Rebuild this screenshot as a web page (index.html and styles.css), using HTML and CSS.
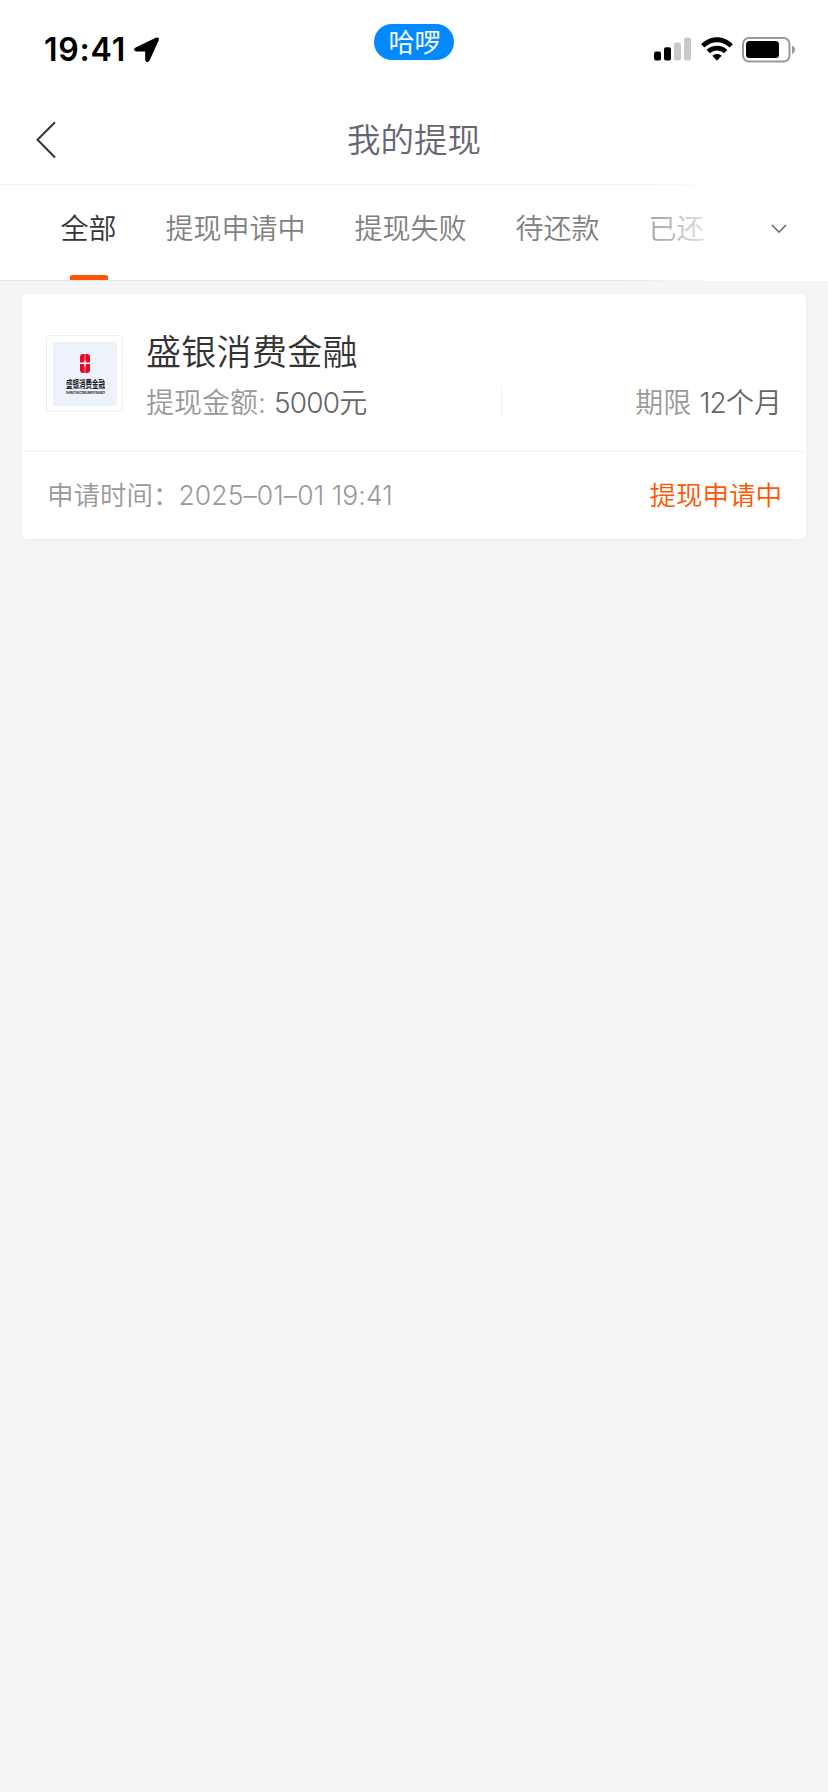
FILE: index.html
```
<!DOCTYPE html>
<html lang="zh-CN">
<head>
    <meta charset="UTF-8">
    <meta name="viewport" content="width=device-width, initial-scale=1.0">
    <title>我的提现</title>
    <link rel="stylesheet" href="styles.css">
</head>
<body>

    <!-- Status bar -->
    <div class="status-bar">
        <div class="status-left">
            <span class="clock">19:41</span>
            <svg class="location" width="26" height="26" viewBox="0 0 26 26">
                <path d="M1.6 10.4 L21.8 .8 Q25.8 -.6 24.6 3.4 L15.6 23.6 Q13 27 11.2 23.6 V14.4 H2.4 Q-2 13 1.6 10.4 Z"/>
            </svg>
        </div>
        <div class="app-pill">哈啰</div>
        <div class="status-right">
            <svg class="signal" width="38" height="24" viewBox="0 0 38 24">
                <rect x="0" y="14.5" width="7" height="9" rx="2"/>
                <rect x="10" y="10.2" width="7" height="13.3" rx="2"/>
                <rect class="off" x="20" y="5.5" width="7" height="18" rx="2"/>
                <rect class="off" x="30" y=".5" width="7" height="23" rx="2"/>
            </svg>
            <svg class="wifi" width="32" height="24" viewBox="0 0 32 24">
                <path d="M.2 7.2 C9 -2.1 23 -2.1 31.8 7.2 L28.6 10.5 C21.4 3.6 10.6 3.6 3.4 10.5 Z"/>
                <path d="M5.6 12.9 C11.5 7.5 20.5 7.5 26.4 12.9 L23 16.2 C19 12.7 13 12.7 9 16.2 Z"/>
                <path d="M11.3 18.7 C14 16.5 18 16.5 20.7 18.7 L16 23.8 Z"/>
            </svg>
            <svg class="battery" width="54" height="26" viewBox="0 0 54 26">
                <rect class="shell" x="1" y="1" width="46.5" height="23.6" rx="6"/>
                <rect x="4" y="4" width="33" height="17" rx="3.5"/>
                <path class="cap" d="M50 8.5 C54 10 54 15.5 50 17 Z"/>
            </svg>
        </div>
    </div>

    <!-- Title -->
    <div class="nav">
        <svg class="back" width="20" height="38" viewBox="0 0 20 38">
            <path d="M19 1.2 L1.5 18.8 L19 36.5"/>
        </svg>
        <h1>我的提现</h1>
    </div>

    <!-- Tabs -->
    <div class="tabs">
        <div class="tab-list">
            <div class="tab active">全部</div>
            <div class="tab">提现申请中</div>
            <div class="tab">提现失败</div>
            <div class="tab">待还款</div>
            <div class="tab">已还</div>
        </div>
        <div class="tab-fade"></div>
        <div class="tab-more">
            <svg width="16" height="10" viewBox="0 0 16 10">
                <path d="M1 1 L8 8.2 L15 1"/>
            </svg>
        </div>
    </div>

    <!-- Record -->
    <div class="card">
        <div class="card-main">
            <div class="logo">
                <svg width="64" height="64" viewBox="0 0 64 64">
                    <rect class="logo-bg" width="64" height="64"/>
                    <rect class="logo-mark" x="27" y="12" width="10" height="19" rx="3"/>
                    <path class="logo-cut" d="M32 17.5 L33.3 20.6 H37 V22 H33.3 L32 25.5 L30.7 22 H27 V20.6 H30.7 Z"/>
                    <path class="logo-slit" d="M32 12 V31"/>
                    <text class="logo-name" x="13" y="46" textLength="39" lengthAdjust="spacingAndGlyphs">盛银消费金融</text>
                    <text class="logo-sub" x="13" y="51.8" textLength="39" lengthAdjust="spacingAndGlyphs">SHENGYIN CONSUMER FINANCE</text>
                </svg>
            </div>
            <div class="info">
                <div class="company">盛银消费金融</div>
                <div class="detail">
                    <div class="amount">提现金额:<b><span class="num">5000</span>元</b></div>
                    <div class="term">期限<b><span class="num">12</span>个月</b></div>
                </div>
            </div>
        </div>
        <div class="card-foot">
            <div class="time">申请时间：<span class="date">2025–01–01 19:41</span></div>
            <div class="state">提现申请中</div>
        </div>
    </div>

</body>
</html>
```

FILE: styles.css
```
* {
    box-sizing: border-box;
}
body {
    margin: 0;
    background: #f5f5f5;
    font-family: Inter, 'Noto Sans CJK SC', sans-serif;
    font-weight: 350;
    min-height: 100vh;
}
.status-bar {
    display: grid;
    grid-template-columns: 1fr 80px 1fr;
    height: 92px;
    background: #fff;
}
.status-left {
    display: flex;
    align-items: flex-start;
    padding: 30px 0 0 44px;
}
.clock {
    font-size: 32px;
    font-weight: 600;
    line-height: 40px;
    width: 90px;
    letter-spacing: 0.8px;
    white-space: nowrap;
}
.location {
    margin-top: 7px;
}
.app-pill {
    height: 36px;
    margin-top: 24px;
    border-radius: 18px;
    background: #0288ff;
    color: #fff;
    font-size: 26px;
    font-weight: 400;
    line-height: 37px;
    padding-left: 1px;
    text-align: center;
}
.status-right {
    display: flex;
    align-items: flex-start;
    justify-content: flex-end;
    padding: 37px 32px 0 0;
}
.signal .off {
    fill: #c9c9c9;
}
.wifi {
    margin-left: 9px;
}
.battery {
    margin-left: 9px;
}
.battery .shell {
    fill: none;
    stroke: #999;
    stroke-width: 2;
}
.battery .cap {
    fill: #999;
}
.nav {
    display: grid;
    grid-template-columns: 60px 1fr 60px;
    align-items: center;
    height: 93px;
    padding-top: 4px;
    background: #fff;
    border-bottom: 1px solid #f1f1f1;
}
.back {
    margin-left: 36px;
    fill: none;
    stroke: #333;
    stroke-width: 2;
}
.nav h1 {
    margin: 0;
    font-size: 33.5px;
    font-weight: 350;
    line-height: 48px;
    color: #666673;
    text-align: center;
}
.tabs {
    position: relative;
    height: 96px;
    background: #fff;
    border-bottom: 1px solid #e6e6e6;
}
.tab-list {
    display: flex;
    gap: 49px;
    width: 704px;
    height: 95px;
    padding-left: 60.5px;
}
.tab {
    flex: none;
    display: flex;
    flex-direction: column;
    align-items: center;
    justify-content: space-between;
    padding-top: 23px;
    font-size: 28px;
    line-height: 42px;
    color: #808080;
}
.tab.active {
    color: #333;
}
.tab.active::after {
    content: "";
    width: 38px;
    height: 5px;
    border-radius: 2px 2px 0 0;
    background: #ff5500;
}
.tab-fade {
    position: absolute;
    top: -1px;
    right: 124px;
    width: 84px;
    height: 97px;
    background: linear-gradient(to right, rgba(255, 255, 255, 0), rgba(255, 255, 255, 0.75));
}
.tab-more {
    position: absolute;
    top: -1px;
    right: 0;
    width: 124px;
    height: 97px;
    padding: 40px 0 0 67px;
    background: #fff;
}
.tab-more svg {
    display: block;
    fill: none;
    stroke: #666;
    stroke-width: 1.6;
}
.card {
    height: 245px;
    margin: 13px 22px 0;
    padding: 0 2px;
    border-radius: 5px;
    background: #fff;
    box-shadow: 0 2px 8px rgba(0, 0, 0, 0.03);
}
.card-main {
    display: flex;
    height: 158px;
    padding: 41px 22px 0 22px;
    border-bottom: 1px solid #f1f1f1;
}
.logo {
    flex: none;
    width: 77px;
    height: 77px;
    padding: 6px;
    border: 1px solid #eee;
    border-radius: 3px;
}
.logo svg {
    display: block;
}
.logo-bg {
    fill: #edf2fb;
}
.logo-mark {
    fill: #e60a28;
}
.logo-cut {
    fill: #fff;
}
.logo-slit {
    stroke: #f7a0aa;
    stroke-width: 0.8;
}
.logo-name {
    font-size: 10px;
    font-weight: 700;
    fill: #1b1b22;
}
.logo-sub {
    font-size: 3px;
    font-weight: 700;
    fill: #1b1b22;
}
.info {
    flex: 1;
    padding-left: 23px;
}
.company {
    margin-top: -9px;
    font-size: 35px;
    line-height: 52px;
    letter-spacing: 0.3px;
    color: #333;
}
.detail {
    display: flex;
    line-height: 42px;
    margin-top: 4px;
    font-size: 28px;
    color: #999;
}
.detail b {
    margin-left: 8px;
    font-weight: 350;
    color: #666;
}
.num {
    letter-spacing: -0.8px;
}
.amount {
    width: 356px;
    background: linear-gradient(#f1f1f1, #f1f1f1) no-repeat right 6px / 1px 28px;
}
.term {
    flex: 1;
    text-align: right;
}
.card-foot {
    display: flex;
    justify-content: space-between;
    padding: 23px 22px 0 23px;
    font-size: 26.5px;
    line-height: 41px;
    color: #999;
}
.date {
    margin-left: -1px;
    letter-spacing: 0.1px;
}
.state {
    color: #ff5500;
}
```
